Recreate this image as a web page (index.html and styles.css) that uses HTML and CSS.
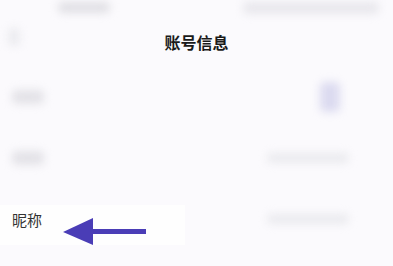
FILE: index.html
```html
<!DOCTYPE html>
<html lang="zh">
<head>
<meta charset="utf-8">
<link rel="stylesheet" href="styles.css">
</head>
<body>
<div class="page">
  <div class="status">
    <div class="blur sb-left"></div>
    <div class="blur sb-right"></div>
  </div>
  <div class="header">
    <div class="blur back"></div>
    <div class="title">账号信息</div>
  </div>
  <div class="list">
    <div class="row">
      <div class="blur label"></div>
      <div class="blur avatar"></div>
    </div>
    <div class="row">
      <div class="blur label"></div>
      <div class="blur value"></div>
    </div>
    <div class="row row-nick">
      <div class="nick-box">
        <span class="nick">昵称</span>
        <svg class="arrow" width="90" height="34" viewBox="0 0 90 34">
          <polygon points="0,15 30,1 30,28" fill="#4a3db6"/>
          <rect x="28" y="12" width="55" height="5" fill="#4a3db6"/>
        </svg>
      </div>
      <div class="blur value"></div>
    </div>
  </div>
</div>
</body>
</html>
```
FILE: styles.css
```css
html, body {
  margin: 0;
  padding: 0;
  background: #fbfafd;
  font-family: "Noto Sans CJK SC", "Noto Sans", sans-serif;
}
.page {
  width: 393px;
  height: 266px;
  overflow: hidden;
}
.blur {
  filter: blur(4px);
  background: #e4e3e8;
  border-radius: 5px;
}
.status {
  height: 22px;
  display: flex;
  justify-content: space-between;
  align-items: flex-start;
  padding: 2px 14px 0 58px;
  box-sizing: border-box;
}
.sb-left {
  width: 52px;
  height: 11px;
  background: #e0dfe4;
}
.sb-right {
  width: 136px;
  height: 12px;
  background: #e8e7ec;
}
.header {
  height: 40px;
  display: flex;
  align-items: center;
  justify-content: center;
  position: relative;
}
.back {
  position: absolute;
  left: 8px;
  top: 6px;
  width: 12px;
  height: 18px;
  background: #ebebef;
}
.title {
  font-size: 16px;
  font-weight: 700;
  color: #1a1a1a;
  margin-top: -1px;
}
.list {
  margin-top: 4px;
}
.row {
  height: 61px;
  display: flex;
  align-items: center;
  justify-content: space-between;
  padding: 0 40px 0 12px;
}
.label {
  width: 32px;
  height: 14px;
  background: #e3e2e7;
}
.avatar {
  width: 20px;
  height: 30px;
  background: #dcdbf0;
  margin-right: 13px;
}
.value {
  width: 82px;
  height: 10px;
  background: #eaeaee;
  margin-right: 4px;
}
.row-nick {
  padding-left: 0;
}
.nick-box {
  position: relative;
  width: 185px;
  height: 40px;
  background: #fefefe;
  display: flex;
  align-items: center;
  padding-left: 12px;
  box-sizing: border-box;
  margin-top: 12px;
}
.nick {
  font-size: 15px;
  color: #333333;
  margin-top: -10px;
}
.arrow {
  position: absolute;
  left: 63px;
  top: 12px;
}
```
